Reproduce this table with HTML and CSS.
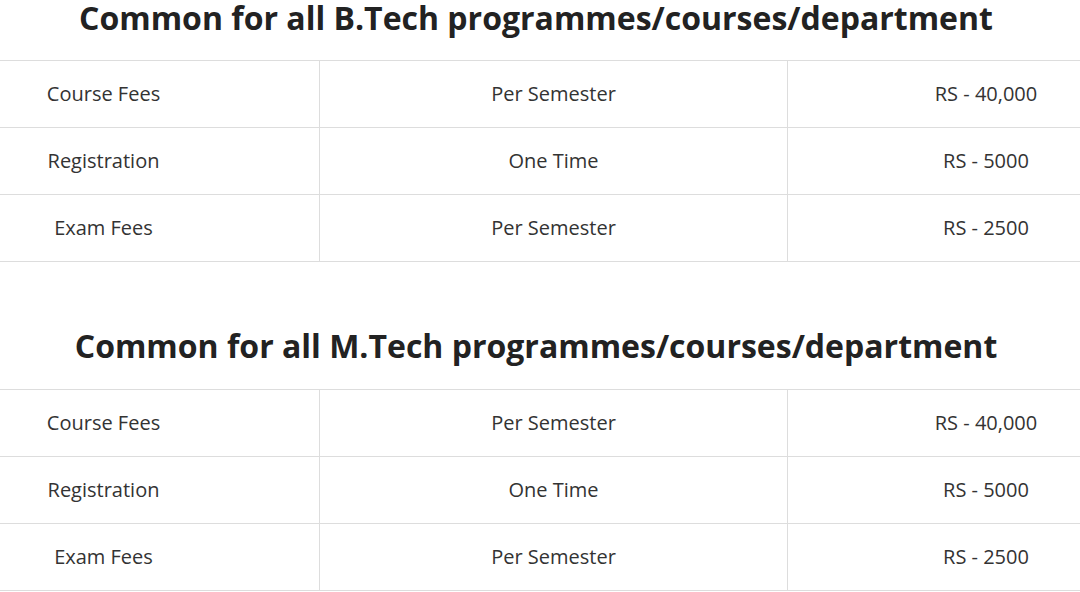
FILE: index.html
```html
<!DOCTYPE html>
<html>
<head>
<meta charset="utf-8">
<link rel="stylesheet" href="styles.css">
</head>
<body>
<div class="page">
  <section class="fee-section">
    <h2 class="fee-title">Common for all B.Tech programmes/courses/department</h2>
    <div class="table-wrap">
      <table class="fee-table">
        <colgroup><col class="c1"><col class="c2"><col class="c3"></colgroup>
        <tr><td>Course Fees</td><td>Per Semester</td><td>RS - 40,000</td></tr>
        <tr><td>Registration</td><td>One Time</td><td>RS - 5000</td></tr>
        <tr><td>Exam Fees</td><td>Per Semester</td><td>RS - 2500</td></tr>
      </table>
    </div>
  </section>
  <section class="fee-section">
    <h2 class="fee-title">Common for all M.Tech programmes/courses/department</h2>
    <div class="table-wrap">
      <table class="fee-table">
        <colgroup><col class="c1"><col class="c2"><col class="c3"></colgroup>
        <tr><td>Course Fees</td><td>Per Semester</td><td>RS - 40,000</td></tr>
        <tr><td>Registration</td><td>One Time</td><td>RS - 5000</td></tr>
        <tr><td>Exam Fees</td><td>Per Semester</td><td>RS - 2500</td></tr>
      </table>
    </div>
  </section>
</div>
</body>
</html>
```

FILE: styles.css
```css
html, body {
  margin: 0;
  padding: 0;
  background: #ffffff;
}
body {
  font-family: "Open Sans", "Liberation Sans", sans-serif;
  color: #333333;
  overflow: hidden;
}
.page {
  margin-top: -4px;
}
.fee-section + .fee-section {
  margin-top: 62px;
}
.fee-title {
  margin: 0 0 20px;
  font-size: 32px;
  line-height: 44px;
  font-weight: 700;
  color: #222222;
  text-align: center;
  padding-right: 8px;
}
.fee-section + .fee-section .fee-title {
  margin-bottom: 21px;
}
.table-wrap {
  overflow: hidden;
}
.fee-table {
  table-layout: fixed;
  width: 1296px;
  margin-left: -112px;
  border-collapse: separate;
  border-spacing: 0;
  border-top: 1px solid #dddddd;
}
.fee-table .c1 { width: 432px; }
.fee-table .c2 { width: 468px; }
.fee-table .c3 { width: 396px; }
.fee-table td {
  padding: 19px 0;
  font-size: 20px;
  line-height: 28px;
  text-align: center;
  border-bottom: 1px solid #dddddd;
}
.fee-table td:not(:last-child) {
  border-right: 1px solid #dddddd;
}
```
